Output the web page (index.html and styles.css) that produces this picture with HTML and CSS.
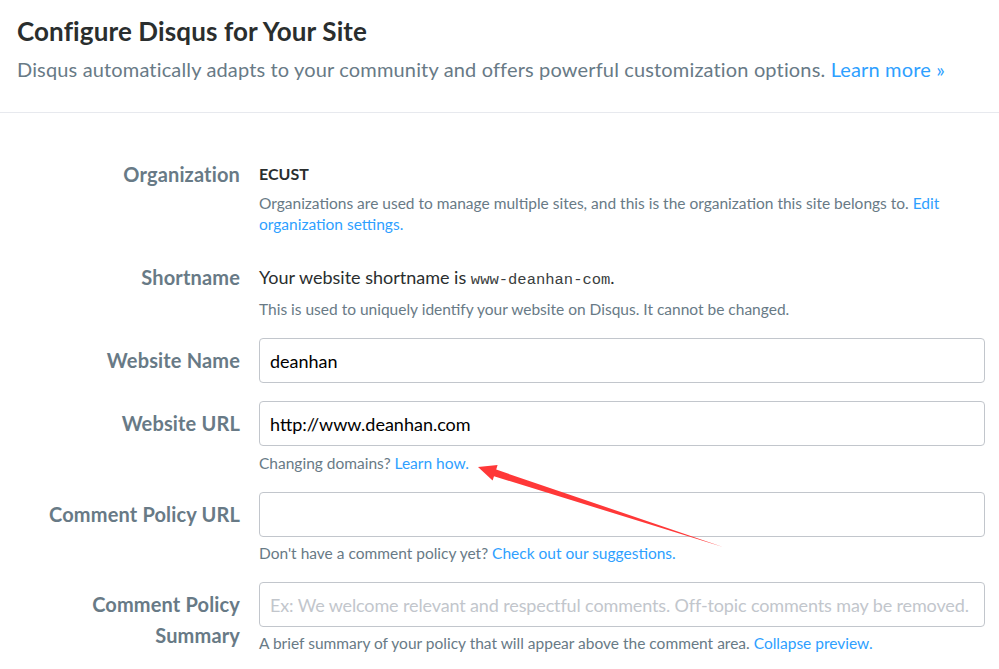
FILE: index.html
```html
<!DOCTYPE html>
<html lang="en">
<head>
<meta charset="utf-8">
<title>Configure Disqus for Your Site</title>
<link rel="stylesheet" href="styles.css">
</head>
<body>
<div class="page">
  <header class="intro">
    <h1 class="title">Configure Disqus for Your Site</h1>
    <p class="lead">Disqus automatically adapts to your community and offers powerful customization options. <a href="#" class="link">Learn more »</a></p>
  </header>

  <form class="form">
    <div class="row row-text">
      <div class="label">Organization</div>
      <div class="field">
        <div class="value value-org">ECUST</div>
        <p class="help help-org">Organizations are used to manage multiple sites, and this is the organization this site belongs to. <a href="#" class="link">Edit organization settings.</a></p>
      </div>
    </div>

    <div class="row row-text row-short">
      <div class="label">Shortname</div>
      <div class="field">
        <div class="value value-short">Your website shortname is <code class="mono">www-deanhan-com</code>.</div>
        <p class="help help-short">This is used to uniquely identify your website on Disqus. It cannot be changed.</p>
      </div>
    </div>

    <div class="row row-input">
      <div class="label">Website Name</div>
      <div class="field">
        <input class="input" type="text" value="deanhan">
      </div>
    </div>

    <div class="row row-input">
      <div class="label">Website URL</div>
      <div class="field">
        <input class="input" type="text" value="http://www.deanhan.com">
        <p class="help">Changing domains? <a href="#" class="link">Learn how.</a></p>
      </div>
    </div>

    <div class="row row-input">
      <div class="label">Comment Policy URL</div>
      <div class="field">
        <input class="input" type="text" value="">
        <p class="help help-low">Don't have a comment policy yet? <a href="#" class="link">Check out our suggestions.</a></p>
      </div>
    </div>

    <div class="row row-input">
      <div class="label">Comment Policy Summary</div>
      <div class="field">
        <input class="input input-placeholder" type="text" placeholder="Ex: We welcome relevant and respectful comments. Off-topic comments may be removed.">
        <p class="help help-low">A brief summary of your policy that will appear above the comment area. <a href="#" class="link">Collapse preview.</a></p>
      </div>
    </div>
  </form>

  <svg class="arrow" width="999" height="669" viewBox="0 0 999 669" aria-hidden="true">
    <polygon points="478,467 497.6,465 496.2,469.6 723,547 494,476.2 492.6,480.4" fill="#ff3838"/>
  </svg>
</div>
</body>
</html>
```

FILE: styles.css
```css
* { box-sizing: border-box; }

html, body {
  margin: 0;
  padding: 0;
  background: #ffffff;
}

body {
  font-family: "Lato", "Open Sans", "Liberation Sans", sans-serif;
  color: #2a2e2e;
}

.page {
  position: relative;
  width: 999px;
  height: 669px;
  overflow: hidden;
}

.intro {
  padding: 15px 0 0 17px;
  height: 113px;
  border-bottom: 1px solid #e7e9ee;
}

.title {
  margin: 0;
  font-size: 26px;
  line-height: 32px;
  font-weight: 700;
  letter-spacing: 0.12px;
  color: #2a2e2e;
}

.lead {
  margin: 7px 0 0;
  font-size: 20px;
  line-height: 30px;
  letter-spacing: 0.15px;
  color: #687a86;
}

.link {
  color: #2e9fff;
  text-decoration: none;
}

.form {
  padding: 47px 14px 0 0;
  display: flex;
  flex-direction: column;
  gap: 18px;
}

.row {
  display: grid;
  grid-template-columns: 240px 1fr;
  column-gap: 19px;
}

.row-short { margin-top: 10px; }

.label {
  justify-self: end;
  max-width: 200px;
  text-align: right;
  font-size: 20px;
  font-weight: 700;
  letter-spacing: 0.15px;
  color: #687a86;
  line-height: 31px;
}

.row-text .label { line-height: 28px; }
.row-input .label { padding-top: 7px; }

.value {
  line-height: 28px;
  color: #2a2e2e;
}

.value-org {
  font-size: 16px;
  font-weight: 700;
}

.value-short {
  font-size: 18px;
}

.mono {
  font-family: "Liberation Mono", "Courier New", monospace;
  font-size: 15.5px;
  line-height: 1;
  font-weight: 400;
  color: #3a3e40;
}

.help {
  margin: 7px 0 0;
  font-size: 15.5px;
  line-height: 21px;
  color: #687a86;
}

.help-org { margin-top: 5px; }
.help-short { margin-top: 8px; }
.help-low { margin-top: 6px; }

.input {
  display: block;
  width: 726px;
  height: 45px;
  margin: 0;
  padding: 0 10px;
  border: 1px solid #c2c6cc;
  border-radius: 4px;
  font-family: inherit;
  font-size: 18px;
  color: #000000;
  background: #ffffff;
  outline: none;
}

.input-placeholder {
  letter-spacing: -0.13px;
}

.input::placeholder {
  color: #c2c6cc;
}

.arrow {
  position: absolute;
  left: 0;
  top: 0;
  pointer-events: none;
}
```
